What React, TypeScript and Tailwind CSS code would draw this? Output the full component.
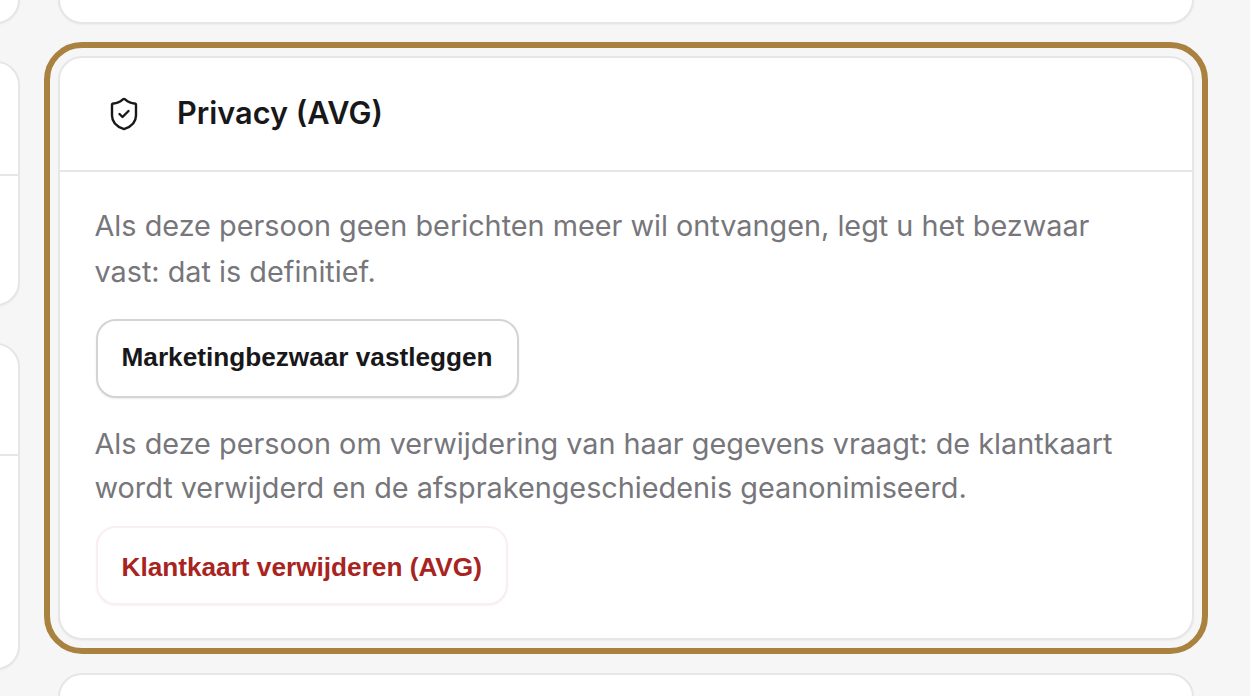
import { ShieldCheck } from 'lucide-react'

const cardClass = 'bg-white border-2 border-[#e6e6e8] rounded-[24px] shadow-[0_1px_2px_rgba(0,0,0,0.04)]'

export default function App() {
  return (
    <div className="h-[696px] w-[1250px] overflow-hidden bg-[#f6f6f6] flex font-['Inter',sans-serif]">
      {/* Left column, cut off by the window */}
      <div className="w-[20px] shrink-0 flex flex-col -mt-[41px]">
        <div className={`${cardClass} h-[65px] w-[60px] -ml-[40px] shrink-0`} />
        <div className={`${cardClass} h-[245px] w-[60px] -ml-[40px] mt-[37px] shrink-0 pt-[111px]`}>
          <div className="h-[2px] bg-[#e6e6e8]" />
        </div>
        <div className={`${cardClass} h-[327px] w-[60px] -ml-[40px] mt-[37px] shrink-0 pt-[109px]`}>
          <div className="h-[2px] bg-[#e6e6e8]" />
        </div>
      </div>

      {/* Right column */}
      <div className="ml-[38px] w-[1136px] shrink-0 flex flex-col gap-[32px] -mt-[40px]">
        <div className={`${cardClass} h-[64px] shrink-0`} />

        <section className={`${cardClass} h-[584px] shrink-0 outline-[6px] outline-[#a98240] outline-offset-[8px]`}>
          <header className="h-[114px] flex items-center pl-[46px] gap-[35px] border-b-2 border-[#e6e6e8]">
            <ShieldCheck size={36} strokeWidth={1.6} className="text-[#18181a] shrink-0" />
            <h2 className="text-[30.7px] font-semibold text-[#18181a] leading-none -mt-[2px]">Privacy (AVG)</h2>
          </header>
          <div className="pl-[34.5px] pr-[36px] pt-[31px]">
            <p className="text-[28.8px] leading-[46px] text-[#76767b]">
              Als deze persoon geen berichten meer wil ontvangen, legt u het bezwaar vast: dat is definitief.
            </p>
            <button className="mt-[24px] ml-[1px] h-[79px] px-[24px] pb-[2px] bg-white border-2 border-[#d4d4d6] rounded-[20px] shadow-[0_1px_2px_rgba(0,0,0,0.08)] font-['Liberation_Sans',sans-serif] font-bold text-[26.2px] text-[#18181a] block">
              Marketingbezwaar vastleggen
            </button>
            <p className="mt-[24px] text-[28.8px] leading-[44px] text-[#76767b]">
              Als deze persoon om verwijdering van haar gegevens vraagt: de klantkaart wordt verwijderd en de afsprakengeschiedenis geanonimiseerd.
            </p>
            <button className="mt-[16px] ml-[1px] h-[79px] px-[24px] pt-[5px] bg-white border-2 border-[#fbeef0] rounded-[20px] shadow-[0_1px_2px_rgba(0,0,0,0.05)] font-['Liberation_Sans',sans-serif] font-bold text-[26.2px] text-[#a8241f] block">
              Klantkaart verwijderen (AVG)
            </button>
          </div>
        </section>

        <div className={`${cardClass} h-[60px] shrink-0 mt-px`} />
      </div>
    </div>
  )
}
